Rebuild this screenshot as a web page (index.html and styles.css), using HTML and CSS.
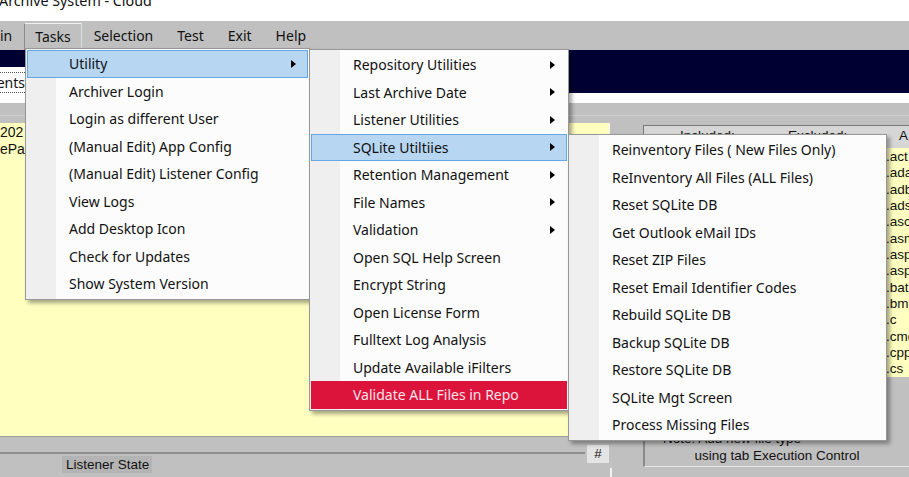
FILE: index.html
```html
<!DOCTYPE html>
<html>
<head>
<meta charset="utf-8">
<title>Archive System - Cloud</title>
<link rel="stylesheet" href="styles.css">
</head>
<body>
<div class="titlebar"><span class="title">Archive System - Cloud</span></div>
<div class="menubar">
  <span class="mb first">in</span>
  <span class="mb active">Tasks</span>
  <span class="mb">Selection</span>
  <span class="mb">Test</span>
  <span class="mb">Exit</span>
  <span class="mb">Help</span>
</div>
<div class="band"><div class="tabstub"><span class="tablabel">ents</span></div></div>
<div class="strip"></div>
<div class="work">
  <div class="leftcol">
    <div class="upper">
      <div class="yellow"><div class="yl">202</div><div class="yl">ePa</div></div>
    </div>
    <div class="lower">
      <div class="lowerleft">
        <div class="rule"></div>
        <span class="state">Listener State</span>
      </div>
      <span class="hash">#</span>
      <span class="vline"></span>
    </div>
  </div>
  <div class="rightcol">
    <div class="grid">
      <div class="ghead"><span class="h-inc">Included:</span><span class="h-exc">Excluded:</span><span class="h-av">A</span></div>
      <div class="gbody">
        <ul class="avail">
          <li>.act</li><li>.ada</li><li>.adb</li><li>.ads</li><li>.asc</li><li>.asm</li><li>.asp</li>
          <li>.asp</li><li>.bat</li><li>.bmp</li><li>.c</li><li>.cmd</li><li>.cpp</li><li>.cs</li>
        </ul>
      </div>
    </div>
    <div class="note">
      <div class="note1">Note: Add new file type</div>
      <div class="note2">using tab Execution Control</div>
    </div>
  </div>
</div>

<div class="menu m1">
  <div class="it hl">Utility<i class="arrow"></i></div>
  <div class="it">Archiver Login</div>
  <div class="it">Login as different User</div>
  <div class="it">(Manual Edit) App Config</div>
  <div class="it">(Manual Edit) Listener Config</div>
  <div class="it">View Logs</div>
  <div class="it">Add Desktop Icon</div>
  <div class="it">Check for Updates</div>
  <div class="it">Show System Version</div>
</div>

<div class="menu m2">
  <div class="it">Repository Utilities<i class="arrow"></i></div>
  <div class="it">Last Archive Date<i class="arrow"></i></div>
  <div class="it">Listener Utilities<i class="arrow"></i></div>
  <div class="it hl">SQLite Utiltiies<i class="arrow"></i></div>
  <div class="it">Retention Management<i class="arrow"></i></div>
  <div class="it">File Names<i class="arrow"></i></div>
  <div class="it">Validation<i class="arrow"></i></div>
  <div class="it">Open SQL Help Screen</div>
  <div class="it">Encrypt String</div>
  <div class="it">Open License Form</div>
  <div class="it">Fulltext Log Analysis</div>
  <div class="it">Update Available iFilters</div>
  <div class="it red">Validate ALL Files in Repo</div>
</div>

<div class="menu m3">
  <div class="it">Reinventory Files ( New Files Only)</div>
  <div class="it">ReInventory All Files (ALL Files)</div>
  <div class="it">Reset SQLite DB</div>
  <div class="it">Get Outlook eMail IDs</div>
  <div class="it">Reset ZIP Files</div>
  <div class="it">Reset Email Identifier Codes</div>
  <div class="it">Rebuild SQLite DB</div>
  <div class="it">Backup SQLite DB</div>
  <div class="it">Restore SQLite DB</div>
  <div class="it">SQLite Mgt Screen</div>
  <div class="it">Process Missing Files</div>
</div>
</body>
</html>
```

FILE: styles.css
```css
* { box-sizing: border-box; }
html, body { margin: 0; padding: 0; }
body {
  width: 909px;
  height: 477px;
  overflow: hidden;
  position: relative;
  background: #c0c0c0;
  font-family: "Noto Sans", "Open Sans", sans-serif;
  color: #111;
}

.titlebar {
  height: 21px;
  background: #fff;
  overflow: hidden;
  font-size: 14.3px;
  line-height: 15px;
}
.title { display: block; margin-top: -7px; margin-left: -1px; white-space: nowrap; }

.menubar {
  height: 29px;
  display: flex;
  background: #c0c0c0;
  font-size: 14px;
  white-space: nowrap;
}
.mb { padding: 0 12px; line-height: 29px; }
.mb.first { padding-left: 0; }
.mb.active {
  margin-top: 2px;
  line-height: 26px;
  padding: 0 10px;
  border-top: 1px solid #efefef;
  border-left: 1px solid #8c8c8c;
  border-right: 1px solid #dedede;
}

.band {
  display: flex;
  height: 53px;
  padding-top: 17px;
  background: linear-gradient(#000033 0 43px, #ffffff 43px 53px);
}
.tabstub {
  width: 25px;
  height: 36px;
  background: #fff;
  overflow: hidden;
  padding-top: 5px;
}
.tablabel {
  display: flex;
  justify-content: flex-end;
  height: 21px;
  line-height: 19px;
  font-size: 14px;
  border-top: 1px dotted #555;
  border-bottom: 1px dotted #555;
  white-space: nowrap;
}

.strip {
  height: 20px;
  background: linear-gradient(#c0c0c0 0 12px, #cfcfcf 12px 13px, #c0c0c0 13px);
}

.work { display: flex; height: 354px; }
.leftcol { width: 643px; display: flex; flex-direction: column; }
.upper { height: 313px; display: flex; }
.yellow {
  width: 610px;
  background: #ffffc0;
  border-right: 1px solid #f4f4f4;
  font-family: "Liberation Sans", Arial, sans-serif;
  font-size: 14px;
  line-height: 17px;
  padding-top: 1px;
  overflow: hidden;
}
.yl { white-space: nowrap; }

.lower {
  flex: 1;
  display: flex;
  border-top: 1px solid #9c9c9c;
  font-family: "Liberation Sans", Arial, sans-serif;
  font-size: 13.5px;
}
.lowerleft { width: 585px; display: flex; flex-direction: column; }
.rule { margin-top: 15px; height: 2px; background: #8e8e8e; }
.state {
  align-self: flex-start;
  margin-top: 2px;
  margin-left: 62px;
  height: 17px;
  width: 90px;
  background: #b4b4b4;
  line-height: 17px;
  padding-left: 4px;
  white-space: nowrap;
}
.hash {
  margin-left: 2px;
  margin-top: 8px;
  width: 22px;
  height: 18px;
  background: #e4e4e4;
  text-align: center;
  line-height: 18px;
}
.vline { margin-left: 1px; margin-top: 31px; width: 2px; background: #f2f2f2; }

.rightcol { width: 266px; display: flex; flex-direction: column; }
.grid {
  margin-top: 2px;
  border-top: 1px solid #7a7a7a;
  border-left: 1px solid #7a7a7a;
  font-family: "Liberation Sans", Arial, sans-serif;
  font-size: 13.5px;
}
.ghead {
  height: 22px;
  background: #d6d6d6;
  display: flex;
  padding-top: 2px;
  line-height: 16px;
  white-space: nowrap;
}
.h-inc { margin-left: 36px; width: 108px; }
.h-exc { width: 111px; }
.h-av { width: 10px; }
.gbody { height: 229px; }
.avail {
  list-style: none;
  margin: 0 0 0 241px;
  padding: 1px 0 0 1px;
  background: #ffffc0;
  height: 229px;
  line-height: 16.35px;
  white-space: nowrap;
  overflow: hidden;
}
.note {
  margin-top: 51px;
  height: 39px;
  border-left: 2px solid #8a8a8a;
  border-bottom: 1px solid #e6e6e6;
  padding-top: 2px;
  font-family: "Liberation Sans", Arial, sans-serif;
  font-size: 13.5px;
  line-height: 17px;
  white-space: nowrap;
}
.note1 { padding-left: 18px; }
.note2 { text-align: center; }

/* popup menus */
.menu {
  position: absolute;
  background: #fcfcfc linear-gradient(to right, #efefef 0 30px, transparent 30px);
  border: 1px solid #979797;
  padding: 1px;
  box-shadow: 3px 3px 4px rgba(0, 0, 0, 0.35);
  font-size: 14px;
  white-space: nowrap;
}
.m1 { left: 25px; top: 48px; width: 285px; }
.m2 { left: 309px; top: 49px; width: 260px; }
.m3 { left: 568px; top: 134px; width: 319px; }

.it {
  position: relative;
  height: 27.5px;
  display: flex;
  align-items: center;
  padding-left: 41px;
  border: 1px solid transparent;
}
.it.hl { background: #b6d6f2; border-color: #66a6e6; }
.it.red { background: #dc143c; border-color: #dc143c; color: #fbe2e8; }
.arrow {
  position: absolute;
  right: 11px;
  top: 50%;
  margin-top: -4px;
  width: 0;
  height: 0;
  border-left: 5px solid #000;
  border-top: 4px solid transparent;
  border-bottom: 4px solid transparent;
}
```
